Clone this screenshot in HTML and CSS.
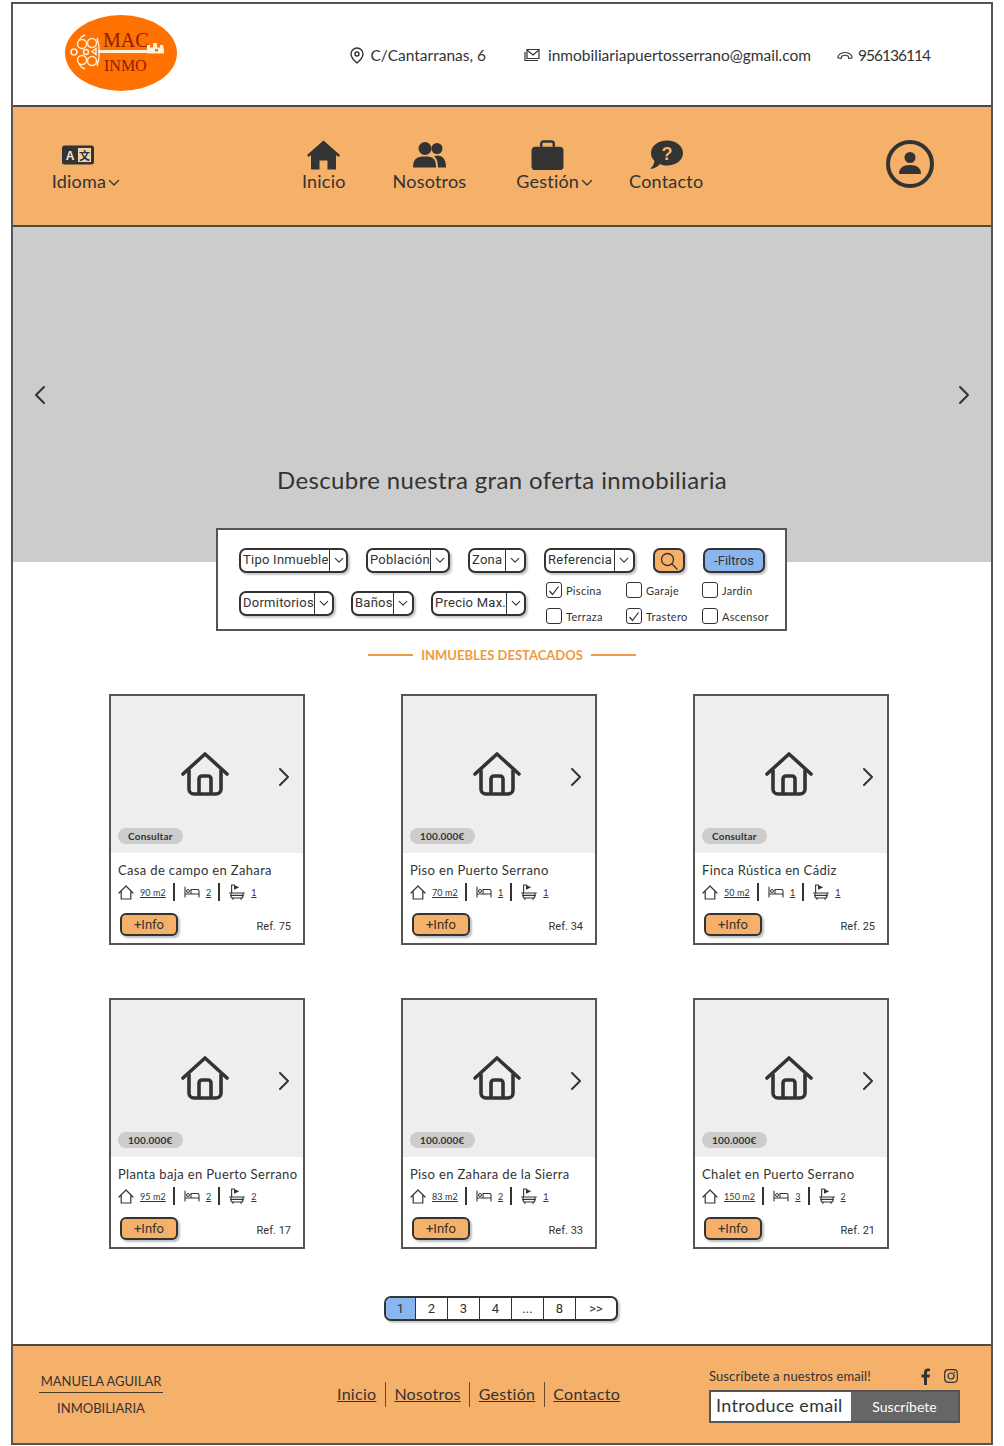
FILE: index.html
```html
<!DOCTYPE html>
<html lang="es">
<head>
<meta charset="UTF-8">
<meta name="viewport" content="width=device-width, initial-scale=1.0">
<title>MAC Inmo</title>
<link rel="stylesheet" href="styles.css">
</head>
<body>

<svg class="defs" width="0" height="0">
  <symbol id="i-chev" viewBox="0 0 12 20"><path d="M2 2l8 8-8 8" fill="none" stroke="currentColor" stroke-width="2" stroke-linecap="round" stroke-linejoin="round"/></symbol>
  <symbol id="i-chev-left" viewBox="0 0 12 20"><path d="M10 2l-8 8 8 8" fill="none" stroke="currentColor" stroke-width="2" stroke-linecap="round" stroke-linejoin="round"/></symbol>
  <symbol id="i-down" viewBox="0 0 12 8"><path d="M1.5 1.5L6 6l4.5-4.5" fill="none" stroke="currentColor" stroke-width="1.3" stroke-linecap="round" stroke-linejoin="round"/></symbol>
  <symbol id="i-home-big" viewBox="0 0 48 44"><path d="M2 22L24 2l22 20" fill="none" stroke="currentColor" stroke-width="3.6" stroke-linecap="round" stroke-linejoin="round"/><path d="M8 18v19a5 5 0 0 0 5 5h22a5 5 0 0 0 5-5V18" fill="none" stroke="currentColor" stroke-width="3.6" stroke-linejoin="round"/><path d="M18 42V27a3 3 0 0 1 3-3h6a3 3 0 0 1 3 3v15" fill="none" stroke="currentColor" stroke-width="3.6"/></symbol>
  <symbol id="i-home-small" viewBox="0 0 16 15"><path d="M1 8l7-7 7 7M3.2 6.4V14h9.6V6.4" fill="none" stroke="currentColor" stroke-width="1.2" stroke-linecap="round" stroke-linejoin="round"/></symbol>
  <symbol id="i-bed" viewBox="0 0 16 12"><path d="M1 1v10M1 8h14v3M15 8V5a1.5 1.5 0 0 0-1.5-1.5H7V8" fill="none" stroke="currentColor" stroke-width="1.1" stroke-linecap="round" stroke-linejoin="round"/><circle cx="4" cy="5" r="1.5" fill="none" stroke="currentColor" stroke-width="1"/></symbol>
  <symbol id="i-bath" viewBox="0 0 16 16"><path d="M0.600 9h14.800M1.600 11.400h12.800M2 9v3a2 2 0 0 0 2 2h8a2 2 0 0 0 2-2V9M2.600 9V1h3v4M4 14v1.500M12 14v1.500" fill="none" stroke="currentColor" stroke-width="1.100" stroke-linecap="round" stroke-linejoin="round"/><path d="M5.600 1.200l4.600 2-4.600 2.200z" fill="currentColor"/></symbol>
</svg>

<div class="page">

  <header class="top">
    <svg class="logo" viewBox="0 0 112 76" width="112" height="76">
      <ellipse cx="56" cy="38" rx="56" ry="38" fill="#ff7100"/>
      <text x="38" y="32" class="logo-mac">MAC</text>
      <text x="39" y="56" class="logo-inmo">INMO</text>
      <path d="M33 35h50v3H33z" fill="#fdf1dc"/>
      <path d="M82 38.500V30h3v2.500h3V28h4v4.500h3V30h3l1 5v3.500z" fill="#fdf1dc"/>
      <path d="M90 36.500h3V34h-3z" fill="#ff7100"/>
      <g fill="none" stroke="#fdf1dc" stroke-width="1.400">
        <circle cx="9" cy="37" r="3"/>
        <circle cx="21" cy="37" r="2.500"/>
        <circle cx="17" cy="29" r="4.500"/>
        <circle cx="17" cy="45" r="4.500"/>
        <circle cx="27" cy="28" r="4.500"/>
        <circle cx="27" cy="46" r="4.500"/>
        <path d="M32 23c3 8 3 20 0 28M20 20c-3 1-5 3-6 5M20 54c-3-1-5-3-6-5M27 36.500l4-3v6z"/>
      </g>
    </svg>
    <div class="contact">
      <span class="contact-item contact-addr">
        <svg width="14" height="17" viewBox="0 0 14 17"><path d="M7 1a6 6 0 0 0-6 6c0 4 6 9 6 9s6-5 6-9a6 6 0 0 0-6-6z" fill="none" stroke="#333" stroke-width="1.400"/><circle cx="7" cy="7" r="2" fill="none" stroke="#333" stroke-width="1.400"/></svg>
        C/Cantarranas, 6
      </span>
      <span class="contact-item">
        <svg width="16" height="14" viewBox="0 0 16 14"><path d="M3 1.500h12v9H3z" fill="none" stroke="#333" stroke-width="1.200"/><path d="M3 2l6 5 6-5M1 4v8.500h13" fill="none" stroke="#333" stroke-width="1.200"/></svg>
        inmobiliariapuertosserrano@gmail.com
      </span>
      <span class="contact-item contact-phone">
        <svg width="16" height="9" viewBox="0 0 16 9"><path d="M1 7c-.5-3 3-5.500 7-5.500S15.500 4 15 7l-3 .5-1-2.500c-2-1-4-1-6 0L4 7.500z" fill="none" stroke="#333" stroke-width="1.200" stroke-linejoin="round"/></svg>
        956136114
      </span>
    </div>
  </header>

  <nav class="nav">
    <a class="nav-item nav-lang">
      <svg width="32" height="20" viewBox="0 0 32 20"><rect width="32" height="19" y="0.500" rx="2.500" fill="#333"/><rect x="16" y="3" width="13" height="14" fill="#f0d2ad"/><text x="8" y="15" class="lang-a">A</text><text x="22.500" y="14.500" class="lang-z">文</text></svg>
      <span class="nav-label">Idioma<svg class="nav-down" width="12" height="8"><use href="#i-down"/></svg></span>
    </a>
    <div class="nav-main">
      <a class="nav-item nav-inicio">
        <svg width="33" height="29" viewBox="0 0 33 29"><path d="M16.500 0L33 14.500l-1.500 2-2.500-2V29h-8.500v-9h-8v9H4V14.500l-2.500 2L0 14.500z" fill="#333"/></svg>
        <span class="nav-label">Inicio</span>
      </a>
      <a class="nav-item nav-nosotros">
        <svg width="33" height="27" viewBox="0 0 33 27"><circle cx="12" cy="7" r="6.500" fill="#333"/><circle cx="24" cy="7" r="5.500" fill="#333"/><path d="M0 26c0-9 4-11 12-11s11 2 11 11z" fill="#333"/><path d="M24 14c6 0 9 4 9 12h-8c0-5-1-9-4-11z" fill="#333"/></svg>
        <span class="nav-label">Nosotros</span>
      </a>
      <a class="nav-item nav-gestion">
        <svg width="33" height="31" viewBox="0 0 33 31"><path d="M10 7V4a2.500 2.500 0 0 1 2.500-2.500h8A2.500 2.500 0 0 1 23 4v3" fill="none" stroke="#333" stroke-width="2.600"/><rect y="7" width="33" height="24" rx="4" fill="#333"/></svg>
        <span class="nav-label">Gestión<svg class="nav-down" width="12" height="8"><use href="#i-down"/></svg></span>
      </a>
      <a class="nav-item nav-contacto">
        <svg width="33" height="29" viewBox="0 0 33 29"><path d="M17 0c9 0 16 5.500 16 12.500S26 25 17 25c-3 0-5-.5-7-1.500C7.500 26.500 4 28 0 28.500c2.500-2 4-5 4.500-8C2 18 1 15.500 1 12.500 1 5.500 8 0 17 0z" fill="#333"/><text x="17" y="19.500" class="help-q">?</text></svg>
        <span class="nav-label">Contacto</span>
      </a>
    </div>
    <svg class="nav-user" width="48" height="48" viewBox="0 0 48 48"><circle cx="24" cy="24" r="22" fill="none" stroke="#333" stroke-width="4"/><circle cx="24" cy="17.500" r="5.500" fill="#333"/><path d="M13 34c0-6 4-9 11-9s11 3 11 9z" fill="#333"/></svg>
  </nav>

  <section class="hero">
    <svg class="hero-arrow" width="12" height="20"><use href="#i-chev-left"/></svg>
    <h1 class="hero-title">Descubre nuestra gran oferta inmobiliaria</h1>
    <svg class="hero-arrow" width="12" height="20"><use href="#i-chev"/></svg>
  </section>

  <form class="filters">
    <div class="filter-row">
      <div class="select sel-tipo"><span class="select-text">Tipo Inmueble</span><span class="select-btn"><svg width="10" height="7"><use href="#i-down"/></svg></span></div>
      <div class="select sel-poblacion"><span class="select-text">Población</span><span class="select-btn"><svg width="10" height="7"><use href="#i-down"/></svg></span></div>
      <div class="select sel-zona"><span class="select-text">Zona</span><span class="select-btn"><svg width="10" height="7"><use href="#i-down"/></svg></span></div>
      <div class="select sel-ref"><span class="select-text">Referencia</span><span class="select-btn"><svg width="10" height="7"><use href="#i-down"/></svg></span></div>
      <button type="button" class="btn-search"><svg width="18" height="18" viewBox="0 0 18 18"><circle cx="7.500" cy="7.500" r="6" fill="none" stroke="#333" stroke-width="1.300"/><path d="M12 12l5 5" stroke="#333" stroke-width="1.300" stroke-linecap="round"/></svg></button>
      <button type="button" class="btn-filtros">-Filtros</button>
    </div>
    <div class="filter-row filter-row-two">
      <div class="select sel-dorm"><span class="select-text">Dormitorios</span><span class="select-btn"><svg width="10" height="7"><use href="#i-down"/></svg></span></div>
      <div class="select sel-banos"><span class="select-text">Baños</span><span class="select-btn"><svg width="10" height="7"><use href="#i-down"/></svg></span></div>
      <div class="select sel-precio"><span class="select-text">Precio Max.</span><span class="select-btn"><svg width="10" height="7"><use href="#i-down"/></svg></span></div>
      <div class="checks">
        <label class="check"><span class="check-box"><svg width="12" height="11" viewBox="0 0 12 11"><path d="M1.500 6l3 3.500 6-8" fill="none" stroke="#333" stroke-width="1.200"/></svg></span>Piscina</label>
        <label class="check"><span class="check-box"></span>Garaje</label>
        <label class="check"><span class="check-box"></span>Jardín</label>
        <label class="check"><span class="check-box"></span>Terraza</label>
        <label class="check"><span class="check-box"><svg width="12" height="11" viewBox="0 0 12 11"><path d="M1.500 6l3 3.500 6-8" fill="none" stroke="#333" stroke-width="1.200"/></svg></span>Trastero</label>
        <label class="check"><span class="check-box"></span>Ascensor</label>
      </div>
    </div>
  </form>

  <h2 class="section-title"><span class="section-line"></span>INMUEBLES DESTACADOS<span class="section-line"></span></h2>

  <div class="cards">

    <article class="card">
      <div class="card-img">
        <svg class="card-house" width="48" height="44"><use href="#i-home-big"/></svg>
        <svg class="card-next" width="12" height="20"><use href="#i-chev"/></svg>
        <span class="price">Consultar</span>
      </div>
      <div class="card-body">
        <h3 class="card-title">Casa de campo en Zahara</h3>
        <div class="specs">
          <svg width="16" height="15"><use href="#i-home-small"/></svg><u class="spec-val">90 m2</u>
          <span class="spec-sep"></span>
          <svg width="16" height="12"><use href="#i-bed"/></svg><u class="spec-val">2</u>
          <span class="spec-sep"></span>
          <svg width="16" height="16"><use href="#i-bath"/></svg><u class="spec-val">1</u>
        </div>
        <div class="card-foot"><button type="button" class="btn-info">+Info</button><span class="ref">Ref. 75</span></div>
      </div>
    </article>

    <article class="card">
      <div class="card-img">
        <svg class="card-house" width="48" height="44"><use href="#i-home-big"/></svg>
        <svg class="card-next" width="12" height="20"><use href="#i-chev"/></svg>
        <span class="price">100.000€</span>
      </div>
      <div class="card-body">
        <h3 class="card-title">Piso en Puerto Serrano</h3>
        <div class="specs">
          <svg width="16" height="15"><use href="#i-home-small"/></svg><u class="spec-val">70 m2</u>
          <span class="spec-sep"></span>
          <svg width="16" height="12"><use href="#i-bed"/></svg><u class="spec-val">1</u>
          <span class="spec-sep"></span>
          <svg width="16" height="16"><use href="#i-bath"/></svg><u class="spec-val">1</u>
        </div>
        <div class="card-foot"><button type="button" class="btn-info">+Info</button><span class="ref">Ref. 34</span></div>
      </div>
    </article>

    <article class="card">
      <div class="card-img">
        <svg class="card-house" width="48" height="44"><use href="#i-home-big"/></svg>
        <svg class="card-next" width="12" height="20"><use href="#i-chev"/></svg>
        <span class="price">Consultar</span>
      </div>
      <div class="card-body">
        <h3 class="card-title">Finca Rústica en Cádiz</h3>
        <div class="specs">
          <svg width="16" height="15"><use href="#i-home-small"/></svg><u class="spec-val">50 m2</u>
          <span class="spec-sep"></span>
          <svg width="16" height="12"><use href="#i-bed"/></svg><u class="spec-val">1</u>
          <span class="spec-sep"></span>
          <svg width="16" height="16"><use href="#i-bath"/></svg><u class="spec-val">1</u>
        </div>
        <div class="card-foot"><button type="button" class="btn-info">+Info</button><span class="ref">Ref. 25</span></div>
      </div>
    </article>

    <article class="card">
      <div class="card-img">
        <svg class="card-house" width="48" height="44"><use href="#i-home-big"/></svg>
        <svg class="card-next" width="12" height="20"><use href="#i-chev"/></svg>
        <span class="price">100.000€</span>
      </div>
      <div class="card-body">
        <h3 class="card-title">Planta baja en Puerto Serrano</h3>
        <div class="specs">
          <svg width="16" height="15"><use href="#i-home-small"/></svg><u class="spec-val">95 m2</u>
          <span class="spec-sep"></span>
          <svg width="16" height="12"><use href="#i-bed"/></svg><u class="spec-val">2</u>
          <span class="spec-sep"></span>
          <svg width="16" height="16"><use href="#i-bath"/></svg><u class="spec-val">2</u>
        </div>
        <div class="card-foot"><button type="button" class="btn-info">+Info</button><span class="ref">Ref. 17</span></div>
      </div>
    </article>

    <article class="card">
      <div class="card-img">
        <svg class="card-house" width="48" height="44"><use href="#i-home-big"/></svg>
        <svg class="card-next" width="12" height="20"><use href="#i-chev"/></svg>
        <span class="price">100.000€</span>
      </div>
      <div class="card-body">
        <h3 class="card-title">Piso en Zahara de la Sierra</h3>
        <div class="specs">
          <svg width="16" height="15"><use href="#i-home-small"/></svg><u class="spec-val">83 m2</u>
          <span class="spec-sep"></span>
          <svg width="16" height="12"><use href="#i-bed"/></svg><u class="spec-val">2</u>
          <span class="spec-sep"></span>
          <svg width="16" height="16"><use href="#i-bath"/></svg><u class="spec-val">1</u>
        </div>
        <div class="card-foot"><button type="button" class="btn-info">+Info</button><span class="ref">Ref. 33</span></div>
      </div>
    </article>

    <article class="card">
      <div class="card-img">
        <svg class="card-house" width="48" height="44"><use href="#i-home-big"/></svg>
        <svg class="card-next" width="12" height="20"><use href="#i-chev"/></svg>
        <span class="price">100.000€</span>
      </div>
      <div class="card-body">
        <h3 class="card-title">Chalet en Puerto Serrano</h3>
        <div class="specs">
          <svg width="16" height="15"><use href="#i-home-small"/></svg><u class="spec-val">150 m2</u>
          <span class="spec-sep"></span>
          <svg width="16" height="12"><use href="#i-bed"/></svg><u class="spec-val">3</u>
          <span class="spec-sep"></span>
          <svg width="16" height="16"><use href="#i-bath"/></svg><u class="spec-val">2</u>
        </div>
        <div class="card-foot"><button type="button" class="btn-info">+Info</button><span class="ref">Ref. 21</span></div>
      </div>
    </article>

  </div>

  <div class="pager">
    <span class="pager-cell pager-on">1</span>
    <span class="pager-cell">2</span>
    <span class="pager-cell">3</span>
    <span class="pager-cell">4</span>
    <span class="pager-cell">...</span>
    <span class="pager-cell">8</span>
    <span class="pager-cell pager-last">&gt;&gt;</span>
  </div>

  <footer class="footer">
    <div class="brand">
      <div class="brand-name">MANUELA AGUILAR</div>
      <div class="brand-sub">INMOBILIARIA</div>
    </div>
    <div class="foot-links">
      <a class="foot-link">Inicio</a>
      <a class="foot-link">Nosotros</a>
      <a class="foot-link">Gestión</a>
      <a class="foot-link">Contacto</a>
    </div>
    <div class="subscribe">
      <div class="sub-top">
        <span class="sub-text">Suscríbete a nuestros email!</span>
        <svg class="social" width="10" height="17" viewBox="0 0 10 17"><path d="M3 17V9.500H0.500V6.500H3V4.500C3 1.800 4.500 0.500 6.800 0.500c1 0 1.900.1 2.200.2v2.600H7.500c-1.200 0-1.500.6-1.500 1.500v1.700h2.900l-.4 3H6V17z" fill="#333"/></svg>
        <svg class="social" width="14" height="14" viewBox="0 0 14 14"><rect x="0.700" y="0.700" width="12.600" height="12.600" rx="3.500" fill="none" stroke="#333" stroke-width="1.200"/><circle cx="7" cy="7" r="3" fill="none" stroke="#333" stroke-width="1.200"/><circle cx="10.500" cy="3.500" r=".8" fill="#333"/></svg>
      </div>
      <div class="sub-form">
        <div class="sub-input">Introduce email</div>
        <button type="button" class="sub-btn">Suscríbete</button>
      </div>
    </div>
  </footer>

</div>

</body>
</html>
```

FILE: styles.css
```css
* {
  box-sizing: border-box;
}
body {
  margin: 0;
  background-color: #fff;
  color: #333;
  font-family: Lato, "Noto Sans", sans-serif;
  overflow: hidden;
}
.defs {
  position: absolute;
}
svg {
  display: block;
  flex: none;
}
.page {
  width: 982px;
  height: 1443px;
  margin: 2px 0 0 11px;
  border: 2px solid #555;
  background-color: #fff;
}

/* cabecera */
.top {
  height: 103px;
  display: flex;
  align-items: center;
  padding: 0 61px 3px 52px;
  border-bottom: 2px solid #4d4a45;
}
.logo-mac,
.logo-inmo {
  font-family: "Liberation Serif", serif;
  fill: #8a2100;
}
.logo-mac {
  font-size: 20px;
}
.logo-inmo {
  font-size: 16px;
}
.contact {
  margin: 4px 0 0 auto;
  display: flex;
  align-items: center;
  gap: 26px;
  font-size: 15.5px;
}
.contact-item {
  display: flex;
  align-items: center;
  gap: 8px;
}
.contact-addr {
  margin-right: 12px;
  gap: 6px;
}
.contact-phone {
  gap: 5px;
  letter-spacing: -1px;
}

/* menu */
.nav {
  height: 120px;
  display: flex;
  align-items: center;
  padding: 0 57px 4px 37px;
  background-color: #f5b06a;
  border-bottom: 2px solid #4d4a45;
}
.nav-item {
  display: flex;
  flex-direction: column;
  align-items: center;
  margin-top: 4px;
}
.nav-item > svg {
  height: 30px;
}
.nav-lang {
  width: 72px;
}
.nav-lang > svg {
  margin-right: 16px;
}
.nav-gestion > svg {
  margin-right: 14px;
}
.nav-nosotros {
  margin-left: -1px;
}
.nav-gestion {
  margin-left: 2px;
}
.nav-contacto {
  margin-left: -12px;
}
.nav-main {
  margin-left: 180px;
  display: flex;
  gap: 48px;
}
.nav-label {
  display: flex;
  align-items: center;
  gap: 2px;
  font-size: 18px;
  line-height: 22px;
  letter-spacing: 0.2px;
}
.nav-down {
  margin-top: 4px;
}
.nav-user {
  margin-left: auto;
}
.lang-a {
  font-family: "Liberation Sans", sans-serif;
  font-size: 12px;
  font-weight: 700;
  fill: #f8e6d0;
  text-anchor: middle;
}
.lang-z {
  font-family: "Noto Sans CJK SC", sans-serif;
  font-size: 11px;
  font-weight: 700;
  fill: #333;
  text-anchor: middle;
}
.help-q {
  font-family: "Liberation Sans", sans-serif;
  font-size: 18px;
  font-weight: 700;
  fill: #f5b06a;
  text-anchor: middle;
}

/* portada */
.hero {
  height: 335px;
  display: flex;
  align-items: center;
  justify-content: space-between;
  padding: 0 21px;
  background-color: #ccc;
}
.hero-title {
  align-self: flex-end;
  margin: 0 0 67px;
  font-size: 24px;
  line-height: 30px;
  font-weight: 400;
  letter-spacing: 0.37px;
}

/* filtros */
.filters {
  position: relative;
  width: 571px;
  height: 103px;
  margin: -34px 0 0 203px;
  padding: 18px 0 0 21px;
  background-color: #fff;
  border: 2px solid #555;
  font-family: Roboto, sans-serif;
}
.filter-row {
  display: flex;
  gap: 18px;
  font-size: 13px;
}
.filter-row-two {
  margin-top: 9px;
  align-items: center;
  gap: 17px;
}
.select {
  height: 25px;
  display: flex;
  align-items: stretch;
  background-color: #fff;
  border: 2px solid #333;
  border-radius: 7px;
  box-shadow: 2px 2px 2px rgba(0, 0, 0, 0.22);
  letter-spacing: 0.25px;
}
.select-text {
  flex: 1;
  padding-left: 2px;
  line-height: 20px;
  white-space: nowrap;
}
.select-btn {
  flex: none;
  width: 19px;
  display: flex;
  align-items: center;
  justify-content: center;
  border-left: 1.5px solid #333;
}
.sel-tipo { width: 109px; }
.sel-poblacion { width: 84px; }
.sel-zona { width: 58px; }
.sel-ref { width: 91px; }
.sel-dorm { width: 95px; }
.sel-banos { width: 63px; }
.sel-precio { width: 95px; }
.btn-search {
  width: 32px;
  height: 25px;
  margin: 0;
  padding: 0;
  display: flex;
  align-items: center;
  justify-content: center;
  background-color: #f5b06a;
  border: 2px solid #333;
  border-radius: 7px;
  box-shadow: 2px 2px 2px rgba(0, 0, 0, 0.22);
}
.btn-filtros {
  width: 62px;
  height: 25px;
  margin: 0;
  padding: 0;
  background-color: #8ab6ef;
  color: #333;
  border: 2px solid #333;
  border-radius: 7px;
  box-shadow: 2px 2px 2px rgba(0, 0, 0, 0.22);
  font-family: Roboto, sans-serif;
  font-size: 13px;
}
.checks {
  margin-left: 3px;
  display: grid;
  grid-template-columns: 80px 76px auto;
  row-gap: 10px;
  font-family: Lato, sans-serif;
  font-size: 11px;
  letter-spacing: 0.3px;
}
.check {
  display: flex;
  align-items: center;
  gap: 4px;
  height: 16px;
}
.check-box {
  width: 16px;
  height: 16px;
  display: flex;
  align-items: center;
  justify-content: center;
  border: 1.5px solid #333;
  border-radius: 3px;
}

/* titulo de seccion */
.section-title {
  margin: 15px 0 0;
  display: flex;
  align-items: center;
  justify-content: center;
  gap: 8px;
  height: 18px;
  color: #ef9a42;
  font-size: 13px;
  font-weight: 700;
}
.section-line {
  width: 45px;
  height: 2px;
  background-color: #ef9a42;
}

/* tarjetas */
.cards {
  margin: 30px 0 0 96px;
  display: grid;
  grid-template-columns: repeat(3, 196px);
  grid-auto-rows: 251px;
  column-gap: 96px;
  row-gap: 53px;
}
.card {
  border: 2px solid #555;
  display: flex;
  flex-direction: column;
  background-color: #fff;
}
.card-img {
  position: relative;
  height: 157px;
  flex: none;
  display: flex;
  align-items: center;
  justify-content: center;
  background-color: #eee;
}
.card-house {
  margin: 0 4px 2px 0;
}
.card-next {
  position: absolute;
  right: 13px;
  top: 71px;
}
.price {
  position: absolute;
  left: 7px;
  bottom: 9px;
  height: 16px;
  padding: 0 10px;
  background-color: #ccc;
  border-radius: 8px;
  font-size: 10px;
  font-weight: 700;
  line-height: 16px;
  letter-spacing: 0.2px;
}
.card-body {
  flex: 1;
  padding: 8px 12px 0 7px;
}
.card-title {
  margin: 0;
  font-size: 13px;
  font-weight: 400;
  line-height: 18px;
  letter-spacing: 0.35px;
  white-space: nowrap;
}
.specs {
  margin-top: 4px;
  height: 18px;
  display: flex;
  align-items: center;
  gap: 6px;
}
.spec-val {
  font-size: 9px;
  letter-spacing: 0.1px;
}
.spec-sep {
  width: 2px;
  height: 18px;
  margin: 0 3px 0 1px;
  background-color: #333;
}
.card-foot {
  margin-top: 12px;
  padding-left: 2px;
  display: flex;
  align-items: center;
  justify-content: space-between;
}
.btn-info {
  width: 58px;
  height: 23px;
  margin: 0;
  padding: 0;
  background-color: #f5b06a;
  color: #333;
  border: 2px solid #333;
  border-radius: 6px;
  box-shadow: 2px 2px 2px rgba(0, 0, 0, 0.25);
  font-family: Roboto, sans-serif;
  font-size: 13px;
}
.ref {
  margin-top: 3px;
  font-family: Roboto, sans-serif;
  font-size: 11px;
}

/* paginacion */
.pager {
  width: 234px;
  height: 25px;
  margin: 47px 0 0 371px;
  display: flex;
  background-color: #fff;
  border: 2px solid #333;
  border-radius: 7px;
  box-shadow: 2px 2px 2px rgba(0, 0, 0, 0.22);
  font-family: Roboto, sans-serif;
  font-size: 13px;
  overflow: hidden;
}
.pager-cell {
  width: 32px;
  display: flex;
  align-items: center;
  justify-content: center;
  border-right: 1px solid #333;
}
.pager-on {
  width: 30px;
  background-color: #8ab6ef;
}
.pager-last {
  flex: 1;
  border-right: 0;
}

/* pie */
.footer {
  height: 99px;
  margin-top: 23px;
  display: flex;
  align-items: center;
  padding: 0 31px 0 26px;
  background-color: #f5b06a;
  border-top: 2px solid #4d4a45;
}
.brand {
  width: 124px;
  font-size: 13px;
  text-align: center;
}
.brand-name {
  padding-bottom: 3px;
  border-bottom: 1.5px solid #4a3a28;
}
.brand-sub {
  margin-top: 7px;
}
.foot-links {
  margin-left: 174px;
  display: flex;
  align-items: center;
  font-size: 16px;
  letter-spacing: 0.28px;
}
.foot-link {
  padding: 0 8.5px;
  height: 25px;
  line-height: 23px;
  text-decoration: underline;
  border-right: 1.5px solid #6b4a28;
}
.foot-link:first-child {
  padding-left: 0;
}
.foot-link:last-child {
  border-right: 0;
}
.subscribe {
  margin-left: auto;
  width: 251px;
}
.sub-top {
  display: flex;
  align-items: center;
  height: 20px;
  font-size: 13px;
  letter-spacing: 0.1px;
}
.sub-text {
  flex: 1;
}
.social + .social {
  margin-left: 13px;
}
.sub-top .social:last-child {
  margin-right: 2px;
}
.sub-form {
  margin-top: 4px;
  height: 33px;
  display: flex;
  border: 2px solid #555;
}
.sub-input {
  flex: 1;
  padding-left: 5px;
  background-color: #fff;
  font-size: 18px;
  line-height: 27px;
  letter-spacing: 0.3px;
}
.sub-btn {
  width: 107px;
  margin: 0;
  padding: 0;
  background-color: #666;
  color: #fff;
  border: 0;
  font-family: Lato, sans-serif;
  font-size: 14px;
}
```
